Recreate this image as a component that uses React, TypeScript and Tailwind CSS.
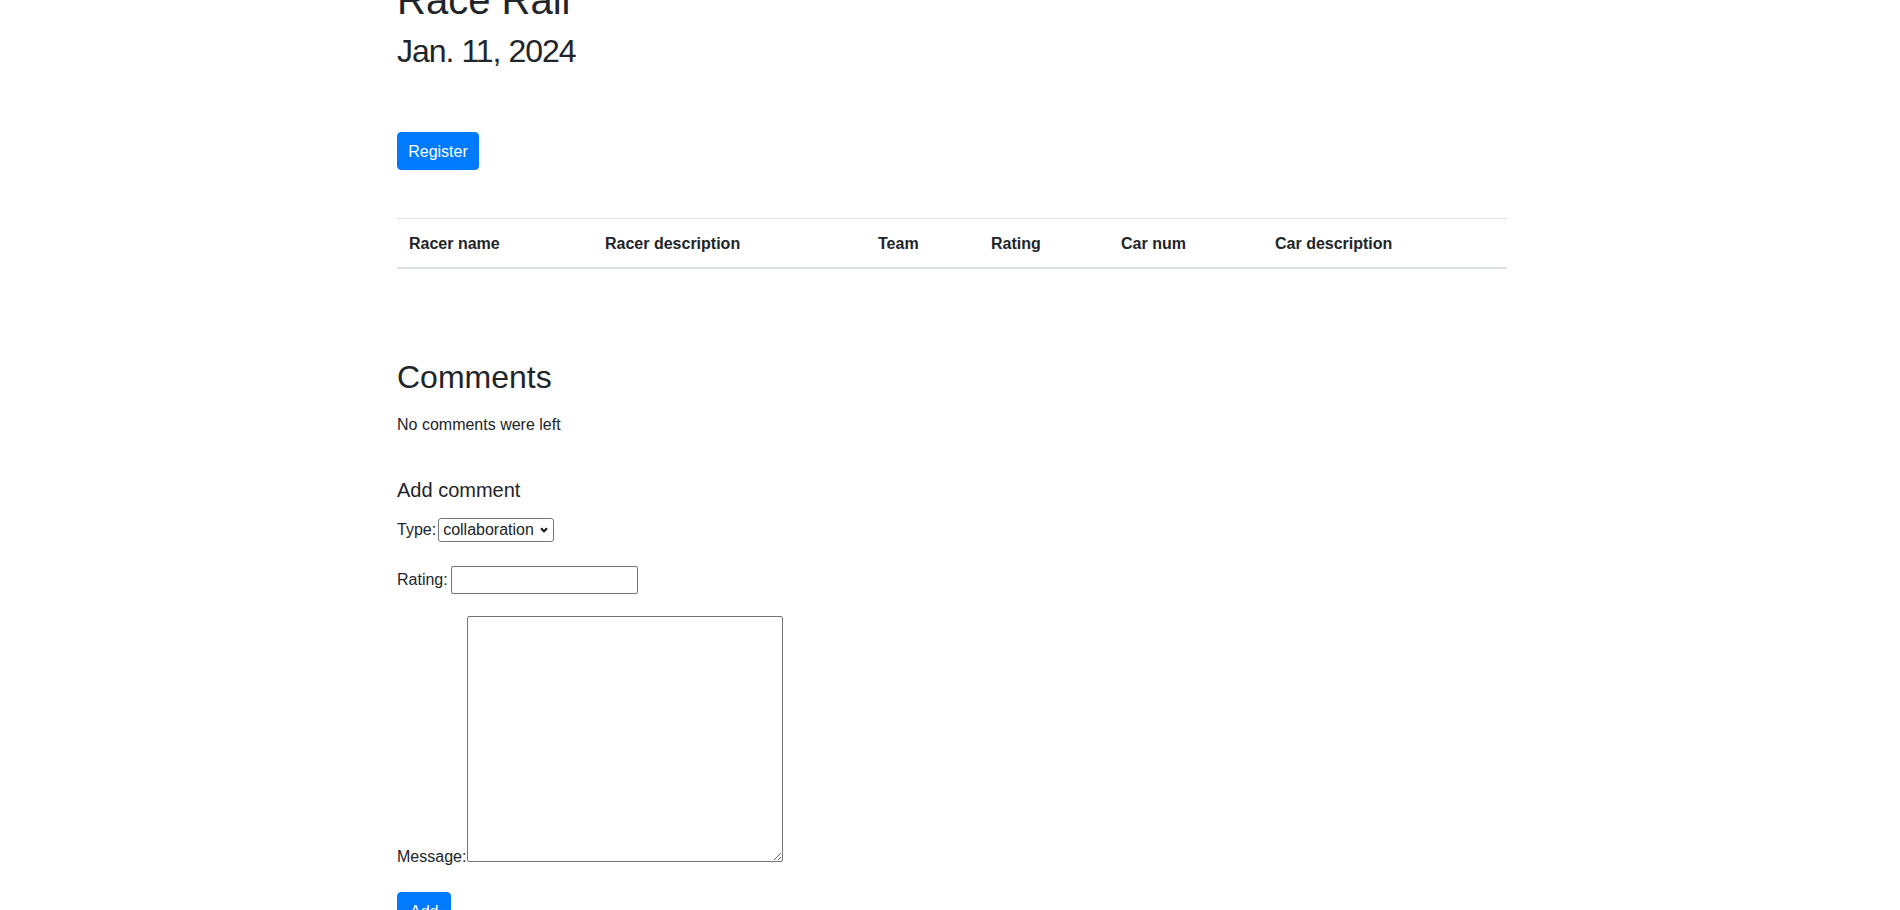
import { useState } from "react";

const columns = [
  { label: "Racer name", w: "w-[196px]" },
  { label: "Racer description", w: "w-[273px]" },
  { label: "Team", w: "w-[113px]" },
  { label: "Rating", w: "w-[130px]" },
  { label: "Car num", w: "w-[154px]" },
  { label: "Car description", w: "w-[244px]" },
];

export default function App() {
  const [type, setType] = useState("collaboration");
  const [rating, setRating] = useState("");
  const [message, setMessage] = useState("");

  return (
    <div className="h-[910px] overflow-hidden bg-white font-['Liberation_Sans',Arial,sans-serif] text-[16px] leading-[24px] text-[#212529]">
      <div className="mx-auto w-[1140px] pl-[17px] pr-[13px]">
        {/* page is scrolled, the title is cut at the top */}
        <h1 className="-mt-[24px] mb-[8px] text-[40px] font-medium leading-[48px]">Race Rall</h1>
        <h2 className="text-[32px] font-medium leading-[38.4px] tracking-[-1px]">Jan. 11, 2024</h2>

        <div className="mt-[62px]">
          <button className="h-[38px] w-[82px] rounded-[4px] border border-[#007bff] bg-[#007bff] pt-[2px] text-center text-white">
            Register
          </button>
        </div>

        <table className="mt-[48px] w-full table-fixed">
          <thead>
            <tr>
              {columns.map((c) => (
                <th
                  key={c.label}
                  className={`${c.w} border-t border-b-2 border-[#dee2e6] px-[12px] pt-[13px] pb-[11px] text-left font-bold`}
                >
                  {c.label}
                </th>
              ))}
            </tr>
          </thead>
          <tbody></tbody>
        </table>

        <h2 className="mt-[89px] text-[32px] font-medium leading-[38.4px]">Comments</h2>
        <p className="mt-[16px]">No comments were left</p>

        <h5 className="mt-[41px] text-[20px] font-medium leading-[24px]">Add comment</h5>

        <div className="mt-[16px]">
          <label className="mr-[2px]">Type:</label>
          <span className="relative inline-block">
            <select
              value={type}
              onChange={(e) => setType(e.target.value)}
              className="h-[24px] w-[116px] appearance-none rounded-[3px] border border-[#767676] bg-white pl-[4px] pr-[20px] leading-[22px]"
            >
              <option value="collaboration">collaboration</option>
              <option value="review">review</option>
              <option value="question">question</option>
            </select>
            <svg
              className="pointer-events-none absolute right-[6px] top-[9px]"
              width="8"
              height="6"
              viewBox="0 0 8 6"
              fill="none"
            >
              <path d="M1 1.2 4 4.4 7 1.2" stroke="#111" strokeWidth="2" />
            </svg>
          </span>
        </div>

        <div className="mt-[24px]">
          <label className="mr-[3px]">Rating:</label>
          <input
            value={rating}
            onChange={(e) => setRating(e.target.value)}
            className="h-[28px] w-[187px] rounded-[2px] border border-[#767676] bg-white px-[2px] py-[1px] align-baseline"
          />
        </div>

        <div className="mt-[22px]">
          <label className="mr-[1px]">Message:</label>
          <textarea
            value={message}
            onChange={(e) => setMessage(e.target.value)}
            className="h-[246px] w-[316px] resize rounded-[2px] border border-[#767676] bg-white px-[2px] py-[2px]"
          />
        </div>

        <div className="mt-[23px]">
          <button className="h-[38px] rounded-[4px] border border-[#007bff] bg-[#007bff] px-[12px] pt-[2px] text-white">
            Add
          </button>
        </div>
      </div>
    </div>
  );
}
